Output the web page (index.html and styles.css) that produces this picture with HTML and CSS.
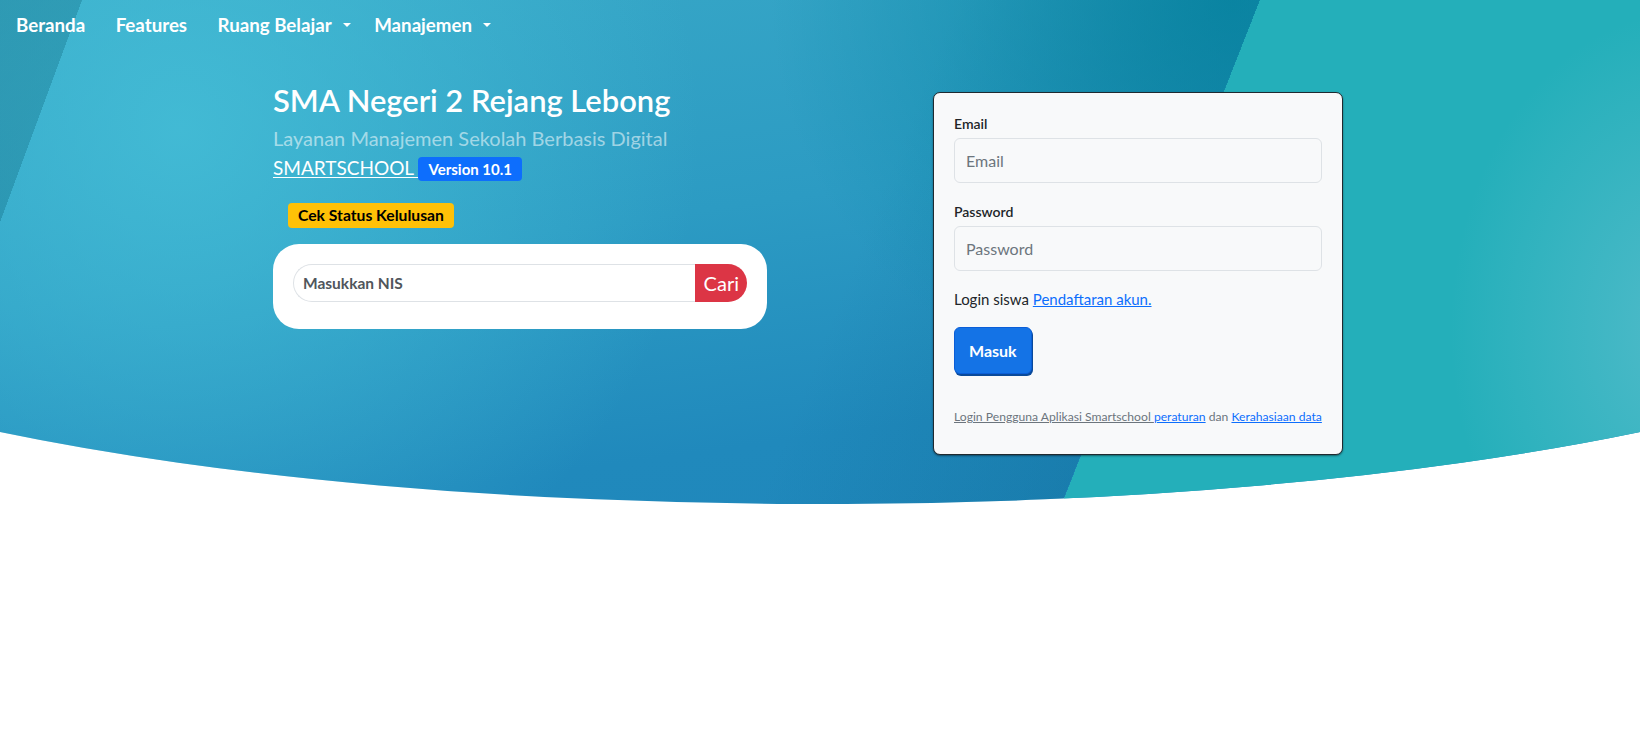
FILE: index.html
```html
<!DOCTYPE html>
<html lang="id">
<head>
<meta charset="utf-8">
<title>SMA Negeri 2 Rejang Lebong - Smartschool</title>
<link rel="stylesheet" href="styles.css">
</head>
<body>
<header class="hero">
  <nav class="nav">
    <a href="#" class="nav-link">Beranda</a>
    <a href="#" class="nav-link">Features</a>
    <a href="#" class="nav-link dd">Ruang Belajar<span class="caret"></span></a>
    <a href="#" class="nav-link dd">Manajemen<span class="caret"></span></a>
  </nav>
  <div class="main">
    <div class="intro">
      <h2 class="title">SMA Negeri 2 Rejang Lebong</h2>
      <p class="subtitle">Layanan Manajemen Sekolah Berbasis Digital</p>
      <p class="brand"><a href="#" class="brand-link">SMARTSCHOOL </a><span class="badge badge-blue">Version 10.1</span></p>
      <div class="status"><span class="badge badge-yellow">Cek Status Kelulusan</span></div>
      <div class="search-box">
        <form class="search" onsubmit="return false">
          <input type="text" placeholder="Masukkan NIS">
          <button type="submit">Cari</button>
        </form>
      </div>
    </div>
    <form class="login-card" onsubmit="return false">
      <label class="form-label">Email</label>
      <input class="form-control" type="email" placeholder="Email">
      <label class="form-label mt">Password</label>
      <input class="form-control" type="password" placeholder="Password">
      <p class="signup">Login siswa <a href="#">Pendaftaran akun.</a></p>
      <button type="submit" class="btn-masuk">Masuk</button>
      <p class="terms"><a href="#" class="muted">Login Pengguna Aplikasi Smartschool </a><a href="#">peraturan</a> dan <a href="#">Kerahasiaan data</a></p>
    </form>
  </div>
</header>
</body>
</html>
```
FILE: styles.css
```css
*{box-sizing:border-box}
html,body{margin:0}
body{font-family:Lato,"Noto Sans",sans-serif;color:#212529;background:#fff;}

.hero{
  height:504px;
  clip-path:path('M0 0 H1640 V432 A1200 267 0 0 1 0 432 Z');
  background:
    radial-gradient(ellipse 240px 320px at 1690px 330px, rgba(110,195,212,.6), rgba(110,195,212,0) 100%),
    linear-gradient(111.45deg, rgba(37,176,187,0) 68.55%, #24afba 68.55%),
    radial-gradient(ellipse 460px 420px at 1230px 0px, rgba(0,128,155,.75), rgba(0,128,155,0) 100%),
    linear-gradient(111.45deg, rgba(10,100,140,0) 52%, rgba(10,100,140,.3) 68.5%, rgba(10,100,140,0) 68.56%),
    linear-gradient(110.27deg, rgba(0,80,100,.25) 4.49%, rgba(0,80,100,0) 4.5%),
    radial-gradient(circle 520px at 180px 130px, rgba(70,192,216,.8), rgba(70,192,216,0)),
    linear-gradient(172deg, #38a8c7 0%, #2c9bc3 42%, #2089bc 75%, #1f86bb 100%);
}

.nav{display:flex;align-items:center;padding:11px 0 11px 16px;}
.nav-link{display:flex;align-items:center;color:#fff;font-weight:700;font-size:18.7px;line-height:28px;text-decoration:none;margin-right:30.5px;}
.nav-link.dd{margin-right:23.5px}
.caret{width:0;height:0;border-top:4.5px solid #fff;border-left:4.5px solid transparent;border-right:4.5px solid transparent;margin-left:11px;margin-top:-1px}

.main{display:grid;grid-template-columns:494px 410px;column-gap:166px;padding:32px 0 0 273px;align-items:start}

.title{margin:0 0 4px;font-size:30.9px;font-weight:600;line-height:1.2;color:#fff}
.subtitle{margin:0;font-size:20px;line-height:30px;color:rgba(255,255,255,.55)}
.brand{margin:0;font-size:19px;line-height:30px}
.brand-link{color:#fff;text-decoration:underline;text-underline-offset:2px}

.badge{display:inline-block;font-weight:700;border-radius:4px;padding:0 10px;white-space:nowrap}
.badge-blue{background:#0d6efd;color:#fff;font-size:15px;line-height:24px}
.status{display:flex;margin:20px 0 0 15px}
.badge-yellow{background:#ffc107;color:#000;font-size:15.7px;line-height:25px}

.search-box{margin-top:15.5px;background:#fff;border-radius:26px;padding:20px 20px 27px}
.search{display:flex;height:38px;margin:0}
.search input{flex:1;min-width:0;height:38px;border:1px solid #dee2e6;border-right:0;border-radius:19px 0 0 19px;padding:0 0 0 9px;font-family:inherit;font-size:15.5px;font-weight:700;color:#495057;background:#fff;outline:none}
.search input::placeholder{color:#50565c;opacity:1}
.search button{height:38px;border:0;border-radius:0 19px 19px 0;background:#dc3545;color:#fff;font-family:inherit;font-size:20px;padding:0 8px 0 9px;line-height:38px;cursor:pointer}

.login-card{margin:10px 0 0;background:#f8f9fa;border:1px solid #1f2a30;border-radius:7px;box-shadow:0 1px 2px rgba(0,0,0,.45);padding:20px 20px 28px}
.form-label{display:block;font-size:14px;font-weight:600;line-height:21px;margin-bottom:4px;color:#212529}
.form-label.mt{margin-top:17.8px}
.form-control{display:block;width:100%;height:45px;border:1px solid #dee2e6;border-radius:6px;background:#f8f9fa;padding:0 11px;font-family:inherit;font-size:16px;color:#212529;outline:none}
.form-control::placeholder{color:#6c757d;opacity:1}
.signup{margin:17.5px 0 0;font-size:15px;line-height:22.5px;color:#212529}
.signup a{color:#0d6efd}
.btn-masuk{display:block;margin-top:16.5px;height:47px;padding:0 14px;background:#1473e6;color:#fff;border:1px solid #0b5ed7;border-radius:6px;font-family:inherit;font-weight:700;font-size:16px;box-shadow:1px 2px 0 #0a4a9a;cursor:pointer}
.terms{margin:33.7px 0 0;font-size:12.15px;line-height:18px;color:#6c757d;white-space:nowrap}
.terms a{color:#0d6efd}
.terms a.muted{color:#6c757d}
```
